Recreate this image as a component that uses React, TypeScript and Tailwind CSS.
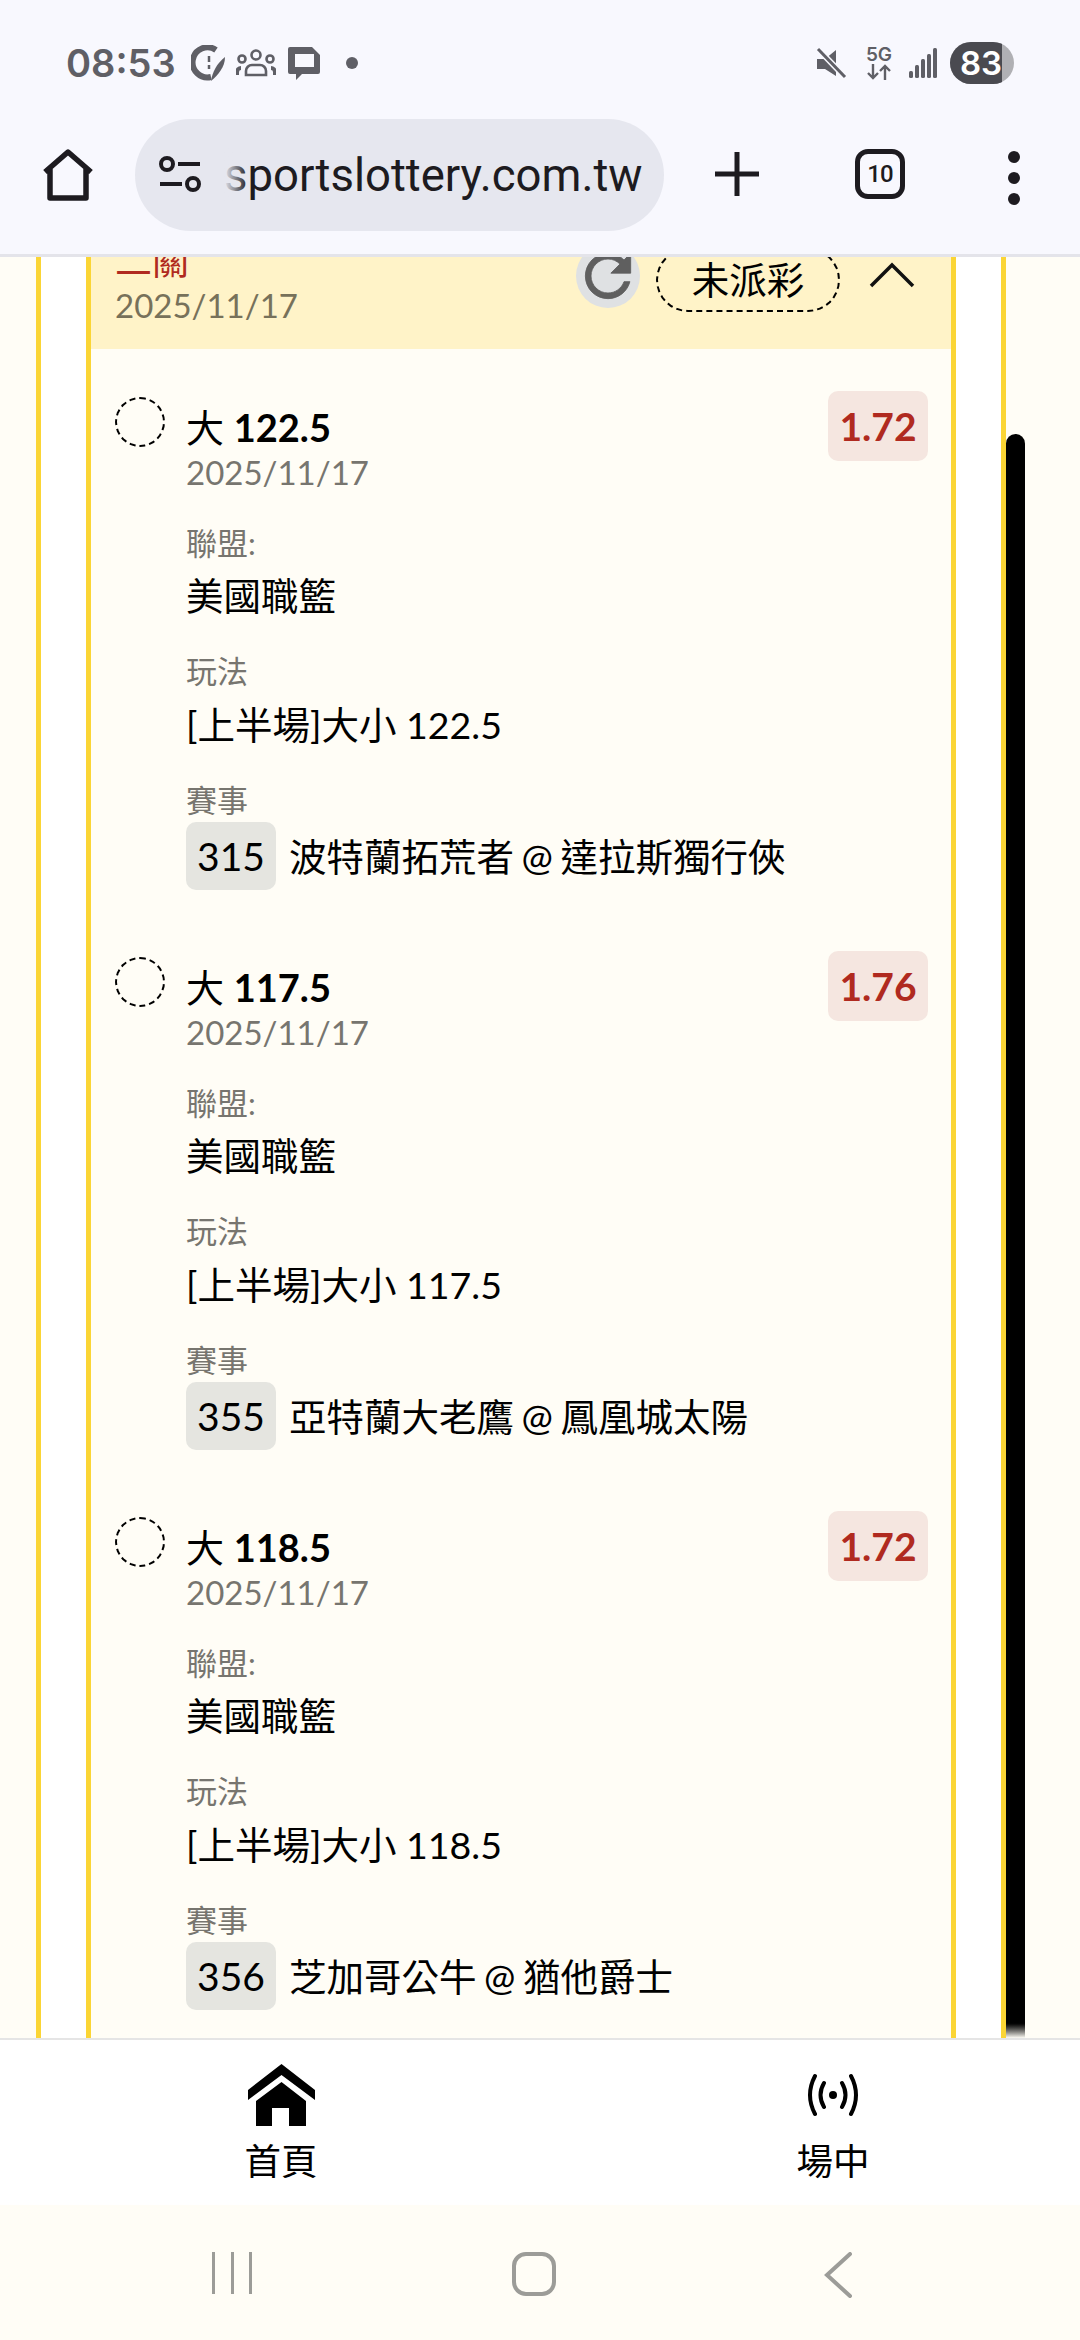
const body = '[font-family:Lato,"Noto_Sans_CJK_TC",sans-serif]';

const bets = [
  { line: "122.5", odds: "1.72", no: "315", game: "波特蘭拓荒者 @ 達拉斯獨行俠" },
  { line: "117.5", odds: "1.76", no: "355", game: "亞特蘭大老鷹 @ 鳳凰城太陽" },
  { line: "118.5", odds: "1.72", no: "356", game: "芝加哥公牛 @ 猶他爵士" },
];

function StatusBar() {
  return (
    <div className="h-[119px] flex items-start justify-between pl-[66px] pr-[66px] pt-[42px] text-[#5f5f66]">
      <div className="flex items-center h-[42px]">
        <span className="text-[38px] leading-[42px] font-semibold [font-family:Inter,sans-serif]">08:53</span>
        <svg className="ml-[15px]" width="36" height="36" viewBox="0 0 36 36" fill="none">
          <path d="M25 5A15 15 0 1 0 20 32" stroke="#5f5f66" strokeWidth="6" />
          <path d="M18 11v6M18 20v4" stroke="#5f5f66" strokeWidth="2.5" />
          <path d="M34 12C34 22 27 30 20 36C21 28 26 18 34 12Z" fill="#5f5f66" />
        </svg>
        <svg className="ml-[9px]" width="40" height="28" viewBox="0 0 40 28" fill="none" stroke="#5f5f66" strokeWidth="2.6">
          <circle cx="20" cy="6" r="4.5" />
          <circle cx="6" cy="10" r="3.5" />
          <circle cx="34" cy="10" r="3.5" />
          <path d="M10 26v-4a6 6 0 0 1 6-6h8a6 6 0 0 1 6 6v4Z" />
          <path d="M1 26v-3a4 4 0 0 1 4-4M39 26v-3a4 4 0 0 0-4-4" strokeWidth="4" />
        </svg>
        <svg className="ml-[11px]" width="34" height="34" viewBox="0 0 34 34">
          <path fillRule="evenodd" d="M3 1h22l8 8v17a2 2 0 0 1-2 2H15l-6 6v-6H3a2 2 0 0 1-2-2V3a2 2 0 0 1 2-2ZM8 8v13h19V8Z" fill="#5f5f66" />
        </svg>
        <span className="ml-[25px] w-[12px] h-[12px] rounded-full bg-[#5f5f66]" />
      </div>
      <div className="flex items-center h-[42px]">
        <svg width="32" height="32" viewBox="0 0 32 32" fill="none">
          <path d="M2 12h8l11-9v26l-11-7H2Z" fill="#5f5f66" />
          <path d="M3 2l27 28" stroke="#f8f8fe" strokeWidth="6" />
          <path d="M3 2l27 28" stroke="#5f5f66" strokeWidth="3" />
        </svg>
        <div className="ml-[18px] w-[28px] flex flex-col items-center">
          <span className="text-[19px] leading-[18px] font-semibold [font-family:Inter,sans-serif]">5G</span>
          <svg width="26" height="16" viewBox="0 0 26 16" fill="none" stroke="#5f5f66" strokeWidth="2.4">
            <path d="M7 0v14M2 9l5 5 5-5M19 16V2M14 7l5-5 5 5" />
          </svg>
        </div>
        <svg className="ml-[16px]" width="28" height="30" viewBox="0 0 28 30" fill="#5f5f66">
          <rect x="0" y="23" width="4" height="7" rx="1.5" />
          <rect x="6" y="17" width="4" height="13" rx="1.5" />
          <rect x="12" y="11" width="4" height="19" rx="1.5" />
          <rect x="18" y="6" width="4" height="24" rx="1.5" />
          <rect x="24" y="0" width="4" height="30" rx="1.5" />
        </svg>
        <div className="ml-[13px] relative w-[64px] h-[42px] rounded-full overflow-hidden bg-[#b0b0b4] flex">
          <div className="w-[52px] h-full bg-[#4a4a50] flex items-center justify-end">
            <span className="text-[33px] leading-none font-semibold text-white [font-family:Inter,sans-serif]">83</span>
          </div>
        </div>
      </div>
    </div>
  );
}

function BrowserBar() {
  return (
    <div className="h-[135px] flex items-start">
      <svg className="ml-[42px] mt-[30px]" width="52" height="52" viewBox="0 0 52 52" fill="none">
        <path d="M3 23L26 3l23 20M8 20v29h36V20" stroke="#1d1b20" strokeWidth="5.5" strokeLinejoin="round" />
      </svg>
      <div className="ml-[41px] w-[529px] h-[112px] rounded-full bg-[#e6e7ef] flex items-center pl-[23px]">
        <svg width="46" height="40" viewBox="0 0 46 40" fill="none" stroke="#1d1b20" strokeWidth="4">
          <circle cx="9" cy="9" r="6" />
          <path d="M20 9h22M2 29h22" />
          <circle cx="35" cy="29" r="6" />
        </svg>
        <div className="relative ml-[20px] mt-[2px]">
          <span className="block text-[45.5px] leading-[56px] text-[#1d1b20] [font-family:Roboto,sans-serif]">sportslottery.com.tw</span>
          <span className="absolute left-0 top-0 w-[24px] h-full bg-gradient-to-r from-[#e6e7ef] to-transparent" />
        </div>
      </div>
      <svg className="ml-[50px] mt-[32px]" width="46" height="46" viewBox="0 0 46 46" fill="none" stroke="#1d1b20" strokeWidth="5">
        <path d="M23 1v44M1 23h44" />
      </svg>
      <div className="ml-[95px] mt-[30px] w-[50px] h-[50px] rounded-[13px] border-[5px] border-[#1d1b20] flex items-center justify-center">
        <span className="text-[24px] leading-none text-[#1d1b20] font-medium tracking-[-1px] [font-family:Roboto,sans-serif]">10</span>
      </div>
      <div className="ml-[103px] mt-[32px] flex flex-col gap-[9px]">
        <span className="w-[12px] h-[12px] rounded-full bg-[#1d1b20]" />
        <span className="w-[12px] h-[12px] rounded-full bg-[#1d1b20]" />
        <span className="w-[12px] h-[12px] rounded-full bg-[#1d1b20]" />
      </div>
    </div>
  );
}

function BetRow({ line, odds, no, game }: { line: string; odds: string; no: string; game: string }) {
  return (
    <div className="flex pt-[42px] pb-[19px] pl-[24px] pr-[23px]">
      <div className="w-[50px] h-[50px] mt-[6px] shrink-0 rounded-full border-2 border-dashed border-black" />
      <div className="ml-[21px] flex-1">
        <div className="mt-[10px] text-[38px] leading-[52px] text-black">
          大 <span className="font-bold">{line}</span>
        </div>
        <div className="text-[33px] leading-[38px] text-[#77756f]">2025/11/17</div>
        <div className="mt-[31px] text-[31px] leading-[42px] text-[#77756f]">聯盟:</div>
        <div className="mt-[7px] text-[37.5px] leading-[50px] text-black">美國職籃</div>
        <div className="mt-[29px] text-[31px] leading-[42px] text-[#77756f]">玩法</div>
        <div className="mt-[8px] text-[37.5px] leading-[50px] text-black">[上半場]大小 {line}</div>
        <div className="mt-[29px] text-[31px] leading-[42px] text-[#77756f]">賽事</div>
        <div className="mt-[1px] flex items-center">
          <span className="w-[90px] h-[68px] rounded-[10px] bg-[#e5e5e0] flex items-center justify-center text-[39px] text-black">{no}</span>
          <span className="ml-[13px] mt-[2px] text-[37.5px] leading-[50px] text-black [word-spacing:-2px]">{game}</span>
        </div>
      </div>
      <div className="w-[100px] h-[70px] rounded-[10px] bg-[#f5e6e0] flex items-center justify-center text-[39px] font-bold text-[#b02a20]">{odds}</div>
    </div>
  );
}

function Content() {
  return (
    <div className="relative flex-1 min-h-0 overflow-hidden bg-[#fffdf6]">
      <div className="-mt-[37px] ml-[36px] w-[970px] border-x-[5px] border-[#fbd535] bg-white px-[45px]">
        <div className="border-x-[5px] border-[#fbd535] bg-[#fffdf6] pb-[100px]">
          <div className="h-[129px] bg-[#fff3c8] flex justify-between pl-[24px] pr-[36px]">
            <div className="pt-[16px]">
              <div className="text-[37px] leading-[50px] text-[#b02a20]">二關</div>
              <div className="text-[33px] leading-[38px] text-[#77715a]">2025/11/17</div>
            </div>
            <div className="flex items-start pt-[24px]">
              <div className="w-[64px] h-[64px] rounded-full bg-[#dfe1e3] flex items-center justify-center">
                <svg width="68" height="68" viewBox="0 0 24 24" fill="#5f5f5f" stroke="#5f5f5f" strokeWidth="0.3" className="shrink-0">
                  <path d="M17.65 6.35C16.2 4.9 14.21 4 12 4c-4.42 0-7.99 3.58-7.99 8s3.57 8 7.99 8c3.73 0 6.84-2.55 7.73-6h-2.08c-.82 2.33-3.04 4-5.65 4-3.31 0-6-2.69-6-6s2.69-6 6-6c1.66 0 3.14.69 4.22 1.78L13 11h7V4l-2.35 2.35z" />
                </svg>
              </div>
              <div className="ml-[16px] mt-[4px] w-[184px] h-[64px] rounded-[32px] border-2 border-dashed border-black flex items-center justify-center text-[37.5px] text-black">未派彩</div>
              <svg className="ml-[29px] mt-[18px]" width="46" height="26" viewBox="0 0 46 26" fill="none" stroke="#111" strokeWidth="3.5">
                <path d="M2 24L23 3l21 21" />
              </svg>
            </div>
          </div>
          {bets.map((b) => (
            <BetRow key={b.no} {...b} />
          ))}
        </div>
      </div>
      <div className="absolute left-[1006px] top-[177px] bottom-0 w-[19px] rounded-t-full bg-gradient-to-b from-black from-[99%] to-[#fffdf6]" />
    </div>
  );
}

function BottomTabs() {
  return (
    <div className="h-[167px] shrink-0 bg-white border-t-[2px] border-[#e5e5e5] grid grid-cols-2">
      <div className="flex flex-col items-center ml-[11px] mr-[-11px]">
        <svg className="mt-[24px]" width="67" height="62" viewBox="0 0 67 62" fill="#000">
          <path d="M33.5 0L67 26V36L33.5 11L0 36V26Z" />
          <path fillRule="evenodd" d="M33.5 18L58 37V62H41V44H24V62H8V37Z" />
        </svg>
        <span className="mt-[10px] text-[36.5px] leading-[50px] text-black">首頁</span>
      </div>
      <div className="flex flex-col items-center ml-[23px] mr-[-23px]">
        <svg className="mt-[33px]" width="54" height="44" viewBox="0 0 54 44" fill="none" stroke="#000" strokeWidth="4" strokeLinecap="round">
          <circle cx="27" cy="22" r="4" fill="#000" stroke="none" />
          <path d="M18 10Q11 22 18 34M36 10Q43 22 36 34M9 3Q-1 22 9 41M45 3Q55 22 45 41" />
        </svg>
        <span className="mt-[19px] text-[36.5px] leading-[50px] text-black">場中</span>
      </div>
    </div>
  );
}

function SystemNav() {
  return (
    <div className="h-[135px] shrink-0 bg-[#fffdf6] relative flex items-start pt-[47px]">
      <div className="ml-[212px] w-[40px] flex justify-between">
        <span className="w-[3px] h-[42px] bg-[#9c9c98]" />
        <span className="w-[3px] h-[42px] bg-[#9c9c98]" />
        <span className="w-[3px] h-[42px] bg-[#9c9c98]" />
      </div>
      <div className="ml-[260px] w-[44px] h-[44px] rounded-[14px] border-[4px] border-[#9c9c98]" />
      <svg className="ml-[267px]" width="30" height="46" viewBox="0 0 30 46" fill="none" stroke="#9c9c98" strokeWidth="4" strokeLinecap="round">
        <path d="M27 2L4 23l23 21" />
      </svg>
    </div>
  );
}

export default function App() {
  return (
    <div className={`w-[1080px] h-[2340px] flex flex-col overflow-hidden ${body}`}>
      <div className="h-[257px] shrink-0 bg-[#f8f8fe] border-b-[3px] border-[#e4e4ea]">
        <StatusBar />
        <BrowserBar />
      </div>
      <Content />
      <BottomTabs />
      <SystemNav />
    </div>
  );
}
